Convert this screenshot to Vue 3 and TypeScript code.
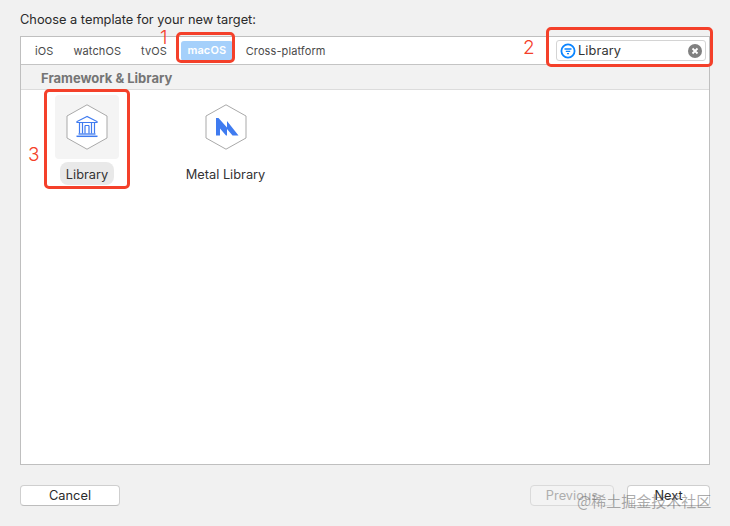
<script setup lang="ts">
const tabs: string[] = ['iOS', 'watchOS', 'tvOS', 'macOS', 'Cross-platform']
</script>

<template>
  <div class="page">
    <h1 class="title">Choose a template for your new target:</h1>
    <section class="panel">
      <div class="tabs">
        <span v-for="t in tabs" :key="t" class="tab" :class="{ active: t === 'macOS' }">{{ t }}</span>
        <div class="search">
          <svg class="filter" width="16" height="16" viewBox="0 0 16 16">
            <circle cx="8" cy="8" r="6.6" fill="#fff" stroke="#0a84ff" stroke-width="1.8" />
            <path d="M4.5 6h7M5.8 8.3h4.4M7 10.6h2" stroke="#0a84ff" stroke-width="1.3" fill="none" />
          </svg>
          <span class="query">Library</span>
          <svg class="clear" width="14" height="14" viewBox="0 0 14 14">
            <circle cx="7" cy="7" r="7" fill="#808080" />
            <path d="M4.500 4.500l5 5M9.500 4.500l-5 5" stroke="#fff" stroke-width="1.8" fill="none" />
          </svg>
        </div>
      </div>
      <div class="section">Framework &amp; Library</div>
      <div class="grid">
        <div class="item selected">
          <div class="icon">
            <svg width="42" height="46" viewBox="0 0 42 46">
              <path d="M21 .8L41 12V34L21 45.200L1 34V12Z" fill="#fff" stroke="#a9a9a9" />
              <g fill="none" stroke="#3f7bf0" stroke-width="1.2">
                <path d="M21 12.500L11 17.500V18.500H31V17.500Z" />
                <path d="M13.500 19v10.500M16.500 19v10.500M19 21.500v8M23 21.500v8M25.500 19v10.500M28.500 19v10.500M19 21.500h4" />
                <path d="M12.500 30h17" stroke-width="1.300" />
                <path d="M10.500 32.300h21" stroke-width="1.500" />
              </g>
            </svg>
          </div>
          <span class="label">Library</span>
        </div>
        <div class="item">
          <div class="icon">
            <svg width="42" height="46" viewBox="0 0 42 46">
              <path d="M21 .8L41 12V34L21 45.200L1 34V12Z" fill="#fff" stroke="#a9a9a9" />
              <path d="M11 14L13.500 14L22 23.500V17L33.500 31.500H27.500L22 25V31.500H21L15 24.500V31.500H11Z" fill="#3f7bf0" />
            </svg>
          </div>
          <span class="label">Metal Library</span>
        </div>
      </div>
    </section>
    <footer class="footer">
      <button class="btn">Cancel</button>
      <div class="right">
        <button class="btn disabled">Previous</button>
        <button class="btn next">Next</button>
      </div>
    </footer>

    <div class="mark m1"></div>
    <div class="mark m2"></div>
    <div class="mark m3"></div>
    <span class="num n1">1</span>
    <span class="num n2">2</span>
    <span class="num n3">3</span>
    <span class="wm">@稀土掘金技术社区</span>
  </div>
</template>

<style>
html, body { margin: 0; background: #f1f1f1; }
</style>

<style scoped>
.page {
  position: relative;
  width: 730px;
  height: 526px;
  box-sizing: border-box;
  padding: 12px 20px 0;
  background: #f1f1f1;
  font-family: Inter, "Liberation Sans", sans-serif;
  color: #222;
  overflow: hidden;
}
.title {
  margin: 0 0 9px;
  font-size: 12.8px;
  line-height: 15px;
  font-weight: 400;
  color: #2a2a2a;
}
.panel {
  height: 429px;
  box-sizing: border-box;
  border: 1px solid #bfbfbf;
  background: #fff;
  display: flex;
  flex-direction: column;
}
.tabs {
  height: 27px;
  flex: none;
  display: flex;
  align-items: center;
  padding-left: 14px;
  border-bottom: 1px solid #c4c4c4;
  font-size: 11px;
  letter-spacing: 0.1px;
  color: #4a4a4a;
  box-sizing: content-box;
}
.tab { margin-right: 20px; }
.tab.active {
  background: #a5d0fb;
  color: #fff;
  font-weight: 600;
  border-radius: 3px;
  padding: 3px 6.5px 4px;
  margin: 0 13px 0 -6px;
  line-height: 13px;
}
.search {
  margin-left: auto;
  margin-right: 3px;
  width: 150px;
  height: 21px;
  box-sizing: border-box;
  border: 1px solid #d4d4d4;
  border-radius: 3px;
  display: flex;
  align-items: center;
  padding: 0 3px;
  background: #fff;
}
.filter { flex: none; }
.query {
  margin-left: 2px;
  font-size: 12.8px;
  color: #333;
  flex: 1;
}
.clear { flex: none; }
.section {
  height: 25px;
  flex: none;
  box-sizing: border-box;
  background: #f2f2f2;
  border-bottom: 1px solid #dcdcdc;
  padding-left: 20px;
  font-size: 13px;
  font-weight: 700;
  line-height: 27px;
  color: #757575;
}
.grid {
  display: flex;
  padding: 5px 0 0 25px;
}
.item {
  width: 82px;
  display: flex;
  flex-direction: column;
  align-items: center;
  margin-right: 56.5px;
}
.icon {
  width: 64px;
  height: 64px;
  border-radius: 4px;
  display: flex;
  align-items: center;
  justify-content: center;
}
.item.selected .icon { background: #f4f4f4; }
.item .label {
  margin-top: 3px;
  padding: 0 6px;
  height: 23px;
  line-height: 25px;
  border-radius: 8px;
  font-size: 12.8px;
  white-space: nowrap;
  color: #333;
}
.item.selected .label { background: #e9e9e9; }
.footer {
  margin-top: 20px;
  display: flex;
  justify-content: space-between;
}
.right { display: flex; gap: 13px; }
.btn {
  width: 100px;
  height: 21px;
  box-sizing: border-box;
  border: 1px solid #cfcfcf;
  border-bottom-color: #bdbdbd;
  border-radius: 4px;
  background: #fff;
  font: 12.8px Inter, "Liberation Sans", sans-serif;
  color: #2a2a2a;
  padding: 0;
}
.btn.next { width: 83px; }
.btn.disabled {
  width: 84px;
  background: #f3f3f3;
  border-color: #dadada;
  color: #aeaeae;
}
.mark {
  position: absolute;
  box-sizing: border-box;
  border: 3px solid #f4402a;
  border-radius: 5px;
}
.m1 { left: 176px; top: 32px; width: 59px; height: 31px; }
.m2 { left: 546px; top: 27px; width: 167px; height: 40px; }
.m3 { left: 44px; top: 89px; width: 86px; height: 100px; }
.num {
  position: absolute;
  font: 300 19px Inter, "Liberation Sans", sans-serif;
  color: #f4402a;
  line-height: 20px;
}
.n1 { left: 160px; top: 28px; }
.n2 { left: 523px; top: 38px; }
.n3 { left: 28px; top: 145px; }
.wm {
  position: absolute;
  left: 577px;
  top: 491px;
  font: 15px "Noto Sans CJK SC", sans-serif;
  line-height: 20px;
  color: rgba(90, 90, 90, 0.5);
  white-space: nowrap;
}
</style>
